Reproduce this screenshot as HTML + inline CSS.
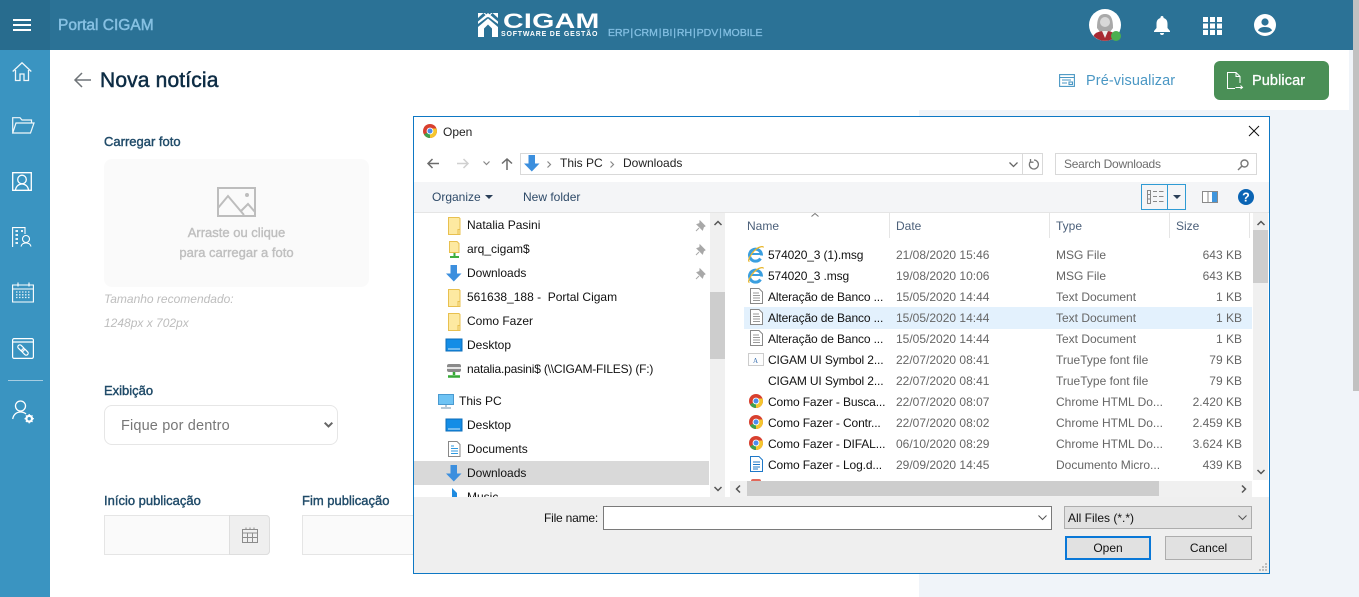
<!DOCTYPE html>
<html lang="pt"><head><meta charset="utf-8"><title>Nova notícia</title>
<style>
*{box-sizing:border-box}
html,body{margin:0;padding:0;width:1359px;height:597px;overflow:hidden;background:#fff;font-family:"Liberation Sans",sans-serif}
.a,.t{position:absolute}
.t{white-space:nowrap;line-height:16px;height:16px}
.b{-webkit-text-stroke:.4px currentColor}
svg{position:absolute;overflow:visible}
.d{font-size:12px;color:#111}
.n{letter-spacing:-.13px}
.g{font-size:12px;color:#666}
.h{font-size:12px;color:#4c607a}
.r{text-align:right;width:60px;left:1182px}
.l{font-size:13px;color:#1f4a68}
</style></head><body>
<svg width="0" height="0" style="position:absolute"><defs>
<g id="folder"><path d="M.5.5H11L12 1.5V17.5H.5Z" fill="#fde9a1" stroke="#e8c04f"/><path d="M10 17V12.5H12" fill="none" stroke="#e8c04f"/></g>
<g id="down"><path d="M4.5 0H11V8.500H15.500L7.800 16.500 0 8.500H4.500Z" fill="#3c8fde"/></g>
<g id="pin"><path d="M4 1L9 6 7.500 7 6.500 10 1 4.500 3.800 3.500ZM3 8L0 11" fill="#a8a8a8" stroke="#a8a8a8"/></g>
<g id="chrome"><circle cx="7" cy="7" r="7" fill="#d8402f"/><path d="M7 7L1 10.500A7 7 0 0 0 7 14Z" fill="#3fa04e"/><path d="M7 7V14A7 7 0 0 0 13.500 4.500H7Z" fill="#f5c62e"/><circle cx="7" cy="7" r="3.400" fill="#fff"/><circle cx="7" cy="7" r="2.500" fill="#4b8ced"/></g>
<g id="doc"><path d="M.5.5H9L12.500 4V15.500H.5Z" fill="#fff" stroke="#888"/><path d="M3 5H9M3 7.500H10M3 10H10M3 12.500H10" stroke="#999"/></g>
<g id="ie"><path d="M13.500 9.500A6 6 0 1 0 12.500 12.500" fill="none" stroke="#3a9fe0" stroke-width="3"/><path d="M3.500 8H14" stroke="#3a9fe0" stroke-width="2"/><path d="M1.500 15.500C-1 15 2.500 9 6 5 10 1 15-.5 15.500 1.500" fill="none" stroke="#e8b52a" stroke-width="1.200"/></g>
<g id="desk"><rect width="16" height="12" fill="#148de6" stroke="#0b6cb8"/><path d="M2 10H14" stroke="#cfe9fb"/></g>
</defs></svg>

<!-- top bar -->
<div class="a" style="left:0;top:0;width:1359px;height:50px;background:#2b7296"></div>
<div class="a" style="left:0;top:0;width:50px;height:50px;background:#286c8e"></div>
<div class="a" style="left:13px;top:19px;width:18px;height:2px;background:#fff"></div>
<div class="a" style="left:13px;top:24px;width:18px;height:2px;background:#fff"></div>
<div class="a" style="left:13px;top:29px;width:18px;height:2px;background:#fff"></div>
<div class="t b" style="left:58px;top:18px;font-size:15.500px;color:#86c0e2;-webkit-text-stroke-width:.5px">Portal CIGAM</div>

<!-- logo -->
<svg style="left:477px;top:13px" width="22" height="24" viewBox="0 0 22 24"><path d="M1 0H8L11 3 14 0H21V5L15.500 0 11 4.500 6.500 0 1 5ZM1 8.500L11 0 21 8.500V11L11 3.500 1 11ZM1 14L11 5.500 21 14V24H15V15.500L11 11.500 7 15.500V24H1Z" fill="#fff"/></svg>
<div class="t" style="left:503px;top:11px;height:22px;line-height:22px;font-size:21px;font-weight:bold;color:#fff;transform-origin:0 50%;transform:scaleX(1.36);letter-spacing:.2px">CIGAM</div>
<div class="t" style="left:501px;top:31px;height:8px;line-height:8px;font-size:7px;font-weight:bold;color:#fff;letter-spacing:.8px">SOFTWARE DE GESTÃO</div>
<div class="t b" style="left:608px;top:25px;font-size:10.500px;color:#83bfe2;word-spacing:-2px;-webkit-text-stroke-width:.3px">ERP | CRM | BI | RH | PDV | MOBILE</div>

<!-- top icons -->
<svg style="left:1089px;top:9px" width="34" height="34" viewBox="0 0 34 34"><circle cx="16" cy="16" r="16" fill="#fff"/><path d="M8 19C8 8 11 5 16 5S24 8 24 19L21 23H11Z" fill="#a9a9a9"/><circle cx="16" cy="13" r="5" fill="#d8d8d8"/><path d="M4.500 27C6 23 12 22 16 22S26 23 27.500 27A16 16 0 0 1 4.500 27Z" fill="#a82a33"/><path d="M13 22H19L16 29Z" fill="#eee"/><circle cx="27" cy="27" r="5" fill="#4caf50"/></svg>
<svg style="left:1154px;top:16px" width="16" height="19" viewBox="0 0 16 19"><path d="M8 0A1.500 1.500 0 0 1 9.500 2C12.500 2.800 13.500 5 13.500 8V12L16 15V16H0V15L2.500 12V8C2.500 5 3.500 2.800 6.500 2A1.500 1.500 0 0 1 8 0ZM6 17H10A2 2 0 0 1 6 17Z" fill="#fff"/></svg>
<svg style="left:1203px;top:17px" width="19" height="18" viewBox="0 0 19 18" fill="#fff"><rect width="5" height="5"/><rect x="7" width="5" height="5"/><rect x="14" width="5" height="5"/><rect y="6.500" width="5" height="5"/><rect x="7" y="6.500" width="5" height="5"/><rect x="14" y="6.500" width="5" height="5"/><rect y="13" width="5" height="5"/><rect x="7" y="13" width="5" height="5"/><rect x="14" y="13" width="5" height="5"/></svg>
<svg style="left:1254px;top:14px" width="22" height="22" viewBox="0 0 22 22"><circle cx="11" cy="11" r="11" fill="#fff"/><circle cx="11" cy="8" r="3.600" fill="#2b7296"/><path d="M4 16.500C5 13.800 8 13 11 13S17 13.800 18 16.500C14 19.500 8 19.500 4 16.500Z" fill="#2b7296"/></svg>

<!-- sidebar -->
<div class="a" style="left:0;top:50px;width:50px;height:547px;background:#3a94c1"></div>
<svg style="left:12px;top:62px" width="20" height="20" viewBox="0 0 20 20" fill="none" stroke="#fff" stroke-width="1.300" opacity=".92"><path d="M.7 9.500L10 .8 19.300 9.500M3.500 8V18.500H8V12H12V18.500H16.500V8"/></svg>
<svg style="left:12px;top:117px" width="23" height="17" viewBox="0 0 23 17" fill="none" stroke="#fff" stroke-width="1.200" opacity=".92"><path d="M.7 16V.7H8L10 3H19.500V6M.7 16H18.500L22 6H4Z"/></svg>
<svg style="left:12px;top:172px" width="20" height="19" viewBox="0 0 20 19" fill="none" stroke="#fff" stroke-width="1.300"><path d="M.7.700H19.300V18.300H.7Z"/><circle cx="10" cy="7.500" r="4.300"/><path d="M3.500 18C4 14 7 12 10 12S16 14 16.500 18"/></svg>
<svg style="left:12px;top:227px" width="20" height="20" viewBox="0 0 20 20" fill="none" stroke="#fff" stroke-width="1.100"><path d="M.6 20V.6H13V7"/><circle cx="14" cy="12" r="3.500"/><path d="M9 19.500C9.500 17 11.500 16 14 16S18.500 17 19 19.500"/><path d="M3.500 4H6M9 4H11M3.500 8H6M3.500 12H6M3.500 16H6" stroke-width="1.800"/></svg>
<svg style="left:12px;top:282px" width="22" height="21" viewBox="0 0 22 21" fill="none" stroke="#fff" stroke-width="1.100"><path d="M.6 3H21.400V20H.6ZM.6 7H21.400M6 .5V4.500M17 .5V4.500"/><path d="M4 10H18M4 12.800H18M4 15.500H18" stroke-dasharray="1.500 1.500" stroke-width="1.300" opacity=".85"/></svg>
<svg style="left:12px;top:338px" width="22" height="21" viewBox="0 0 22 21" fill="none" stroke="#fff" stroke-width="1.200"><rect x=".6" y=".6" width="20.800" height="19.800" rx="1.500"/><path d="M.6 4H21.400"/><g transform="rotate(45 11 12)"><rect x="4.500" y="10" width="7.500" height="4" rx="2"/><rect x="10" y="10" width="7.500" height="4" rx="2"/></g></svg>
<div class="a" style="left:8px;top:380px;width:35px;height:1px;background:#a6cde2"></div>
<svg style="left:12px;top:400px" width="23" height="24" viewBox="0 0 23 24" fill="none" stroke="#fff" stroke-width="1.300"><circle cx="8.500" cy="6" r="5"/><path d="M.7 19C1.500 14 5 12 8.500 12 11 12 13 13 14 14"/><circle cx="17.200" cy="18.700" r="2.800" stroke-width="2.200"/><path d="M17.200 14V23.400M12.500 18.700H22M13.900 15.400L20.500 22M20.500 15.400L13.900 22" stroke-width="1.200" stroke-dasharray="1.500 6.500"/></svg>

<!-- main -->
<div class="a" style="left:919px;top:110px;width:434px;height:487px;background:#f0f4f9"></div>
<div class="a" style="left:1349px;top:50px;width:4px;height:60px;background:#f0f4f9"></div>
<div class="a" style="left:1353px;top:0;width:6px;height:597px;background:#f0f4f9"></div>
<div class="a" style="left:1353px;top:0;width:6px;height:391px;background:#c1c1c1"></div>

<svg style="left:74px;top:72px" width="17" height="16" viewBox="0 0 17 16" fill="none" stroke="#6f7478" stroke-width="1.500"><path d="M17 8H1M8 1L1 8 8 15"/></svg>
<div class="t b" style="left:100px;top:69px;height:24px;line-height:24px;font-size:21px;color:#0d2c44;letter-spacing:.15px;-webkit-text-stroke-width:.5px">Nova notícia</div>

<svg style="left:1059px;top:74px" width="16" height="13" viewBox="0 0 16 13" fill="none" stroke="#4a97c4" stroke-width="1.100"><rect x=".6" y=".6" width="14.800" height="11.800"/><path d="M.6 3.500H15.400M3 6H12M3 9H8"/><rect x="10" y="8" width="3.500" height="2.500"/></svg>
<div class="t" style="left:1086px;top:73px;font-size:14.500px;color:#4a97c4;letter-spacing:.1px">Pré-visualizar</div>
<div class="a" style="left:1214px;top:61px;width:115px;height:39px;background:#4a8f56;border-radius:6px"></div>
<svg style="left:1227px;top:72px" width="16" height="17" viewBox="0 0 16 17" fill="none" stroke="#fff" stroke-width="1"><path d="M13 11V4.500L9 .5H.5V16.500H8M9 .5V4.500H13M8.500 15.500H15.500M13.500 13.500L15.500 15.500 13.500 17"/></svg>
<div class="t b" style="left:1252px;top:73px;font-size:14.500px;color:#fff;letter-spacing:.1px;-webkit-text-stroke-width:.3px">Publicar</div>

<div class="t b l" style="left:104px;top:134px">Carregar foto</div>
<div class="a" style="left:104px;top:159px;width:265px;height:128px;background:#fafafa;border-radius:8px"></div>
<svg style="left:217px;top:187px" width="39" height="30" viewBox="0 0 39 30" fill="none" stroke="#bdbdbd" stroke-width="2"><rect x="1" y="1" width="37" height="28"/><path d="M1 21L11 9 27 28M24 24L31 17 38 25"/><circle cx="30" cy="8" r="1" fill="#bdbdbd"/></svg>
<div class="t b" style="left:104px;top:225px;width:265px;text-align:center;font-size:13px;color:#bfbfbf">Arraste ou clique</div>
<div class="t b" style="left:104px;top:245px;width:265px;text-align:center;font-size:13px;color:#bfbfbf">para carregar a foto</div>
<div class="t" style="left:104px;top:291px;font-size:12px;font-style:italic;color:#bdbdbd">Tamanho recomendado:</div>
<div class="t" style="left:104px;top:315px;font-size:12px;font-style:italic;color:#bdbdbd">1248px x 702px</div>

<div class="t b l" style="left:104px;top:383px">Exibição</div>
<div class="a" style="left:104px;top:405px;width:234px;height:40px;border:1px solid #e6e6e6;border-radius:8px;background:#fff"></div>
<div class="t" style="left:121px;top:418px;font-size:14.500px;color:#777;letter-spacing:.15px">Fique por dentro</div>
<svg style="left:324px;top:422px" width="9" height="6" viewBox="0 0 9 6" fill="none" stroke="#666" stroke-width="2"><path d="M.7.700L4.500 4.500 8.300.7"/></svg>

<div class="t b l" style="left:104px;top:493px">Início publicação</div>
<div class="t b l" style="left:302px;top:493px">Fim publicação</div>
<div class="a" style="left:104px;top:515px;width:166px;height:40px;background:#fafafa;border:1px solid #e5e5e5;border-radius:0 4px 4px 0"></div>
<div class="a" style="left:229px;top:515px;width:41px;height:40px;background:#efefef;border:1px solid #dedede;border-radius:0 4px 4px 0"></div>
<svg style="left:241px;top:527px" width="18" height="17" viewBox="0 0 18 17" fill="none" stroke="#8c8c8c"><path d="M1.500 2.500H16.500V15.500H1.500ZM1.500 6H16.500M1.500 10.500H16.500M6.500 6V15.500M11.500 6V15.500M5 .5V3M9 .5V3M13 .5V3"/></svg>
<div class="a" style="left:302px;top:515px;width:112px;height:40px;background:#fafafa;border:1px solid #e5e5e5"></div>

<!-- dialog -->
<div class="a" style="left:413px;top:116px;width:857px;height:458px;background:#fff;border:1px solid #0e78c4"></div>
<svg style="left:423px;top:124px" width="14" height="14"><use href="#chrome"/></svg>
<div class="t d" style="left:443px;top:124px;color:#222">Open</div>
<svg style="left:1249px;top:126px" width="10" height="10" fill="none" stroke="#111"><path d="M0 0L10 10M10 0L0 10"/></svg>

<svg style="left:427px;top:158px" width="12" height="11" viewBox="0 0 12 11" fill="none" stroke="#6c6c6c" stroke-width="1.500"><path d="M12 5.500H1M5.500 1L1 5.500 5.500 10"/></svg>
<svg style="left:457px;top:158px" width="12" height="11" viewBox="0 0 12 11" fill="none" stroke="#d0d0d0" stroke-width="1.500"><path d="M0 5.500H11M6.500 1L11 5.500 6.500 10"/></svg>
<svg style="left:483px;top:161px" width="7" height="5" viewBox="0 0 7 5" fill="none" stroke="#888" stroke-width="1.200"><path d="M.5.5L3.500 3.500 6.500.5"/></svg>
<svg style="left:501px;top:158px" width="12" height="12" viewBox="0 0 12 12" fill="none" stroke="#6c6c6c" stroke-width="1.500"><path d="M6 12V1M1 5.500L6 1 11 5.500"/></svg>
<div class="a" style="left:520px;top:153px;width:523px;height:22px;border:1px solid #d9d9d9;background:#fff"></div>
<div class="a" style="left:1022px;top:153px;width:1px;height:22px;background:#d9d9d9"></div>
<svg style="left:524px;top:155px" width="16" height="17"><use href="#down"/></svg>
<svg style="left:547px;top:161px" width="5" height="7" fill="none" stroke="#888" stroke-width="1.200"><path d="M.5.5L3.500 3.500.5 6.500"/></svg>
<div class="t" style="left:560px;top:155px;font-size:12px;color:#222">This PC</div>
<svg style="left:610px;top:161px" width="5" height="7" fill="none" stroke="#888" stroke-width="1.200"><path d="M.5.5L3.500 3.500.5 6.500"/></svg>
<div class="t" style="left:623px;top:155px;font-size:12px;color:#222">Downloads</div>
<svg style="left:1009px;top:162px" width="9" height="6" fill="none" stroke="#666" stroke-width="1.300"><path d="M.5.5L4.500 4.500 8.500.5"/></svg>
<svg style="left:1028px;top:159px" width="11" height="11" viewBox="0 0 11 11" fill="none" stroke="#777" stroke-width="1.300"><path d="M6 1A4.500 4.500 0 1 1 2.500 2.500M2.500 0V3.200H5.500"/></svg>
<div class="a" style="left:1055px;top:153px;width:202px;height:22px;border:1px solid #d9d9d9;background:#fff"></div>
<div class="t" style="left:1064px;top:156px;font-size:12px;color:#6d6d6d;letter-spacing:-.25px">Search Downloads</div>
<svg style="left:1237px;top:159px" width="12" height="12" viewBox="0 0 12 12" fill="none" stroke="#777" stroke-width="1.400"><circle cx="7.500" cy="4.500" r="3.500"/><path d="M5 7L1 11"/></svg>

<div class="a" style="left:414px;top:182px;width:855px;height:31px;background:#f4f5f7;border-bottom:1px solid #e5e5e5"></div>
<div class="t" style="left:432px;top:189px;font-size:12px;color:#2e4a68">Organize</div>
<div class="a" style="left:485px;top:195px;border:4px solid transparent;border-top:4px solid #2a3f58;border-bottom:0"></div>
<div class="t" style="left:523px;top:189px;font-size:12px;color:#2e4a68">New folder</div>
<div class="a" style="left:1141px;top:184px;width:45px;height:26px;border:1px solid #2f9bd4;background:#f4f5f7"></div>
<div class="a" style="left:1167px;top:184px;width:1px;height:26px;background:#2f9bd4"></div>
<svg style="left:1147px;top:190px" width="17" height="14" fill="none" stroke="#888"><path d="M.5.500H3.500V13.500H.5ZM.5 4.500H3.500M.5 9H3.500M6 1.500H10M12 1.500H16.500M6 6.500H10M12 6.500H16.500M6 11.500H10M12 11.500H16.500"/></svg>
<div class="a" style="left:1173px;top:195px;border:4px solid transparent;border-top:4px solid #2a3f58;border-bottom:0"></div>
<svg style="left:1202px;top:191px" width="16" height="12"><rect x=".5" y=".5" width="15" height="11" fill="#fff" stroke="#8a8a8a"/><rect x="10" y="1" width="5" height="10" fill="#3f95dc"/><path d="M6 1V11" stroke="#8a8a8a"/></svg>
<svg style="left:1238px;top:189px" width="16" height="16"><circle cx="8" cy="8" r="8" fill="#0a64b4"/><text x="8" y="12.500" text-anchor="middle" font-family="Liberation Sans" font-size="12.500" font-weight="bold" fill="#fff">?</text></svg>

<!-- tree pane -->
<div class="a" style="left:414px;top:461px;width:295px;height:24px;background:#d9d9d9"></div>
<div class="t d" style="left:467px;top:217px">Natalia Pasini</div>
<div class="t d" style="left:467px;top:241px">arq_cigam$</div>
<div class="t d" style="left:467px;top:265px">Downloads</div>
<div class="t d" style="left:467px;top:289px">561638_188 -&nbsp; Portal Cigam</div>
<div class="t d" style="left:467px;top:313px">Como Fazer</div>
<div class="t d" style="left:467px;top:337px">Desktop</div>
<div class="t d" style="left:467px;top:361px;letter-spacing:-.2px">natalia.pasini$ (\\CIGAM-FILES) (F:)</div>
<div class="t d" style="left:459px;top:393px">This PC</div>
<div class="t d" style="left:467px;top:417px">Desktop</div>
<div class="t d" style="left:467px;top:441px">Documents</div>
<div class="t d" style="left:467px;top:465px">Downloads</div>
<div class="a" style="left:467px;top:485px;width:60px;height:12px;overflow:hidden"><div class="t d" style="left:0;top:4px">Music</div></div>
<svg style="left:448px;top:217px" width="13" height="18"><use href="#folder"/></svg>
<svg style="left:449px;top:241px" width="13" height="18"><path d="M.5.500H8L10 2.500V11.500H.5Z" fill="#fde9a1" stroke="#e8c04f"/><path d="M5.500 12V15M1 16H10" stroke="#3fae3f" stroke-width="2"/></svg>
<svg style="left:446px;top:265px" width="16" height="17"><use href="#down"/></svg>
<svg style="left:448px;top:289px" width="13" height="18"><use href="#folder"/></svg>
<svg style="left:448px;top:313px" width="13" height="18"><use href="#folder"/></svg>
<svg style="left:446px;top:339px" width="16" height="12"><use href="#desk"/></svg>
<svg style="left:447px;top:364px" width="14" height="14"><rect width="14" height="8" rx="2" fill="#8a8a8a"/><rect y="3" width="14" height="2" fill="#e6e6e6"/><path d="M7 8V11M1 12.500H13" stroke="#37a937" stroke-width="2.500"/></svg>
<svg style="left:438px;top:394px" width="16" height="15"><rect x=".5" y=".5" width="15" height="10" fill="#6ec3f4" stroke="#4a9ad0"/><path d="M8 11V13M3 14H13" stroke="#9db6c8" stroke-width="1.500"/></svg>
<svg style="left:446px;top:419px" width="16" height="12"><use href="#desk"/></svg>
<svg style="left:448px;top:441px" width="13" height="16"><path d="M.5.500H9L12 3.500V15.500H.5Z" fill="#fff" stroke="#888"/><path d="M3 5H6M3 7.500H10M3 10H10M3 12.500H10" stroke="#2f9ae0"/></svg>
<svg style="left:446px;top:465px" width="16" height="17"><use href="#down"/></svg>
<svg style="left:452px;top:488px" width="8" height="9"><path d="M0 0L5 5V9H0Z" fill="#1f8be0"/></svg>
<svg style="left:696px;top:220px" width="11" height="11"><use href="#pin"/></svg>
<svg style="left:696px;top:244px" width="11" height="11"><use href="#pin"/></svg>
<svg style="left:696px;top:268px" width="11" height="11"><use href="#pin"/></svg>

<!-- tree scrollbar -->
<div class="a" style="left:710px;top:213px;width:15px;height:284px;background:#f0f0f0"></div>
<div class="a" style="left:710px;top:292px;width:15px;height:67px;background:#cdcdcd"></div>
<svg style="left:714px;top:220px" width="8" height="6" fill="none" stroke="#555" stroke-width="1.500"><path d="M.5 5L4 1.500 7.500 5"/></svg>
<svg style="left:714px;top:486px" width="8" height="6" fill="none" stroke="#555" stroke-width="1.500"><path d="M.5 1L4 4.500 7.500 1"/></svg>

<!-- list header -->
<div class="t h" style="left:747px;top:218px">Name</div>
<svg style="left:811px;top:213px" width="8" height="4" fill="none" stroke="#777"><path d="M.5 3.500L4 .5 7.500 3.500"/></svg>
<div class="t h" style="left:896px;top:218px">Date</div>
<div class="t h" style="left:1056px;top:218px">Type</div>
<div class="t h" style="left:1176px;top:218px">Size</div>
<div class="a" style="left:889px;top:213px;width:1px;height:25px;background:#e5e5e5"></div>
<div class="a" style="left:1049px;top:213px;width:1px;height:25px;background:#e5e5e5"></div>
<div class="a" style="left:1169px;top:213px;width:1px;height:25px;background:#e5e5e5"></div>
<div class="a" style="left:1249px;top:213px;width:1px;height:25px;background:#e5e5e5"></div>

<!-- rows -->
<div class="a" style="left:744px;top:307px;width:508px;height:22px;background:#e3f1fd"></div>
<div class="t d n" style="left:768px;top:247px">574020_3 (1).msg</div><div class="t g" style="left:896px;top:247px">21/08/2020 15:46</div><div class="t g" style="left:1056px;top:247px">MSG File</div><div class="t g r" style="top:247px">643 KB</div>
<div class="t d n" style="left:768px;top:268px">574020_3 .msg</div><div class="t g" style="left:896px;top:268px">19/08/2020 10:06</div><div class="t g" style="left:1056px;top:268px">MSG File</div><div class="t g r" style="top:268px">643 KB</div>
<div class="t d n" style="left:768px;top:289px">Alteração de Banco ...</div><div class="t g" style="left:896px;top:289px">15/05/2020 14:44</div><div class="t g" style="left:1056px;top:289px">Text Document</div><div class="t g r" style="top:289px">1 KB</div>
<div class="t d n" style="left:768px;top:310px">Alteração de Banco ...</div><div class="t g" style="left:896px;top:310px">15/05/2020 14:44</div><div class="t g" style="left:1056px;top:310px">Text Document</div><div class="t g r" style="top:310px">1 KB</div>
<div class="t d n" style="left:768px;top:331px">Alteração de Banco ...</div><div class="t g" style="left:896px;top:331px">15/05/2020 14:44</div><div class="t g" style="left:1056px;top:331px">Text Document</div><div class="t g r" style="top:331px">1 KB</div>
<div class="t d n" style="left:768px;top:352px">CIGAM UI Symbol 2...</div><div class="t g" style="left:896px;top:352px">22/07/2020 08:41</div><div class="t g" style="left:1056px;top:352px">TrueType font file</div><div class="t g r" style="top:352px">79 KB</div>
<div class="t d n" style="left:768px;top:373px">CIGAM UI Symbol 2...</div><div class="t g" style="left:896px;top:373px">22/07/2020 08:41</div><div class="t g" style="left:1056px;top:373px">TrueType font file</div><div class="t g r" style="top:373px">79 KB</div>
<div class="t d n" style="left:768px;top:394px">Como Fazer - Busca...</div><div class="t g" style="left:896px;top:394px">22/07/2020 08:07</div><div class="t g" style="left:1056px;top:394px">Chrome HTML Do...</div><div class="t g r" style="top:394px">2.420 KB</div>
<div class="t d n" style="left:768px;top:415px">Como Fazer - Contr...</div><div class="t g" style="left:896px;top:415px">22/07/2020 08:02</div><div class="t g" style="left:1056px;top:415px">Chrome HTML Do...</div><div class="t g r" style="top:415px">2.459 KB</div>
<div class="t d n" style="left:768px;top:436px">Como Fazer - DIFAL...</div><div class="t g" style="left:896px;top:436px">06/10/2020 08:29</div><div class="t g" style="left:1056px;top:436px">Chrome HTML Do...</div><div class="t g r" style="top:436px">3.624 KB</div>
<div class="t d n" style="left:768px;top:457px">Como Fazer - Log.d...</div><div class="t g" style="left:896px;top:457px">29/09/2020 14:45</div><div class="t g" style="left:1056px;top:457px">Documento Micro...</div><div class="t g r" style="top:457px">439 KB</div>

<svg style="left:748px;top:246px" width="16" height="17"><use href="#ie"/></svg>
<svg style="left:748px;top:267px" width="16" height="17"><use href="#ie"/></svg>
<svg style="left:750px;top:288px" width="13" height="16"><use href="#doc"/></svg>
<svg style="left:750px;top:309px" width="13" height="16"><use href="#doc"/></svg>
<svg style="left:750px;top:330px" width="13" height="16"><use href="#doc"/></svg>
<svg style="left:748px;top:353px" width="16" height="13"><rect x=".5" y=".5" width="15" height="12" fill="#fdfdfd" stroke="#ccc"/><text x="5" y="10" font-family="Liberation Serif" font-size="7" fill="#3a70b0">A</text></svg>
<svg style="left:749px;top:394px" width="14" height="14"><use href="#chrome"/></svg>
<svg style="left:749px;top:415px" width="14" height="14"><use href="#chrome"/></svg>
<svg style="left:749px;top:436px" width="14" height="14"><use href="#chrome"/></svg>
<svg style="left:750px;top:456px" width="13" height="16"><path d="M.5.500H9L12.500 4V15.500H.5Z" fill="#fff" stroke="#1e78c8"/><path d="M3 6H10M3 8.500H10M3 11H10M3 13H8" stroke="#1e78c8"/></svg>
<div class="a" style="left:751px;top:479px;width:10px;height:2px;background:#e2685a;border-radius:5px 5px 0 0"></div>

<!-- list scrollbars -->
<div class="a" style="left:1253px;top:213px;width:15px;height:267px;background:#f0f0f0"></div>
<div class="a" style="left:1253px;top:230px;width:15px;height:53px;background:#cdcdcd"></div>
<svg style="left:1257px;top:220px" width="8" height="6" fill="none" stroke="#555" stroke-width="1.500"><path d="M.5 5L4 1.500 7.500 5"/></svg>
<svg style="left:1257px;top:469px" width="8" height="6" fill="none" stroke="#555" stroke-width="1.500"><path d="M.5 1L4 4.500 7.500 1"/></svg>
<div class="a" style="left:730px;top:481px;width:522px;height:16px;background:#f0f0f0"></div>
<div class="a" style="left:747px;top:481px;width:412px;height:15px;background:#cdcdcd"></div>
<svg style="left:735px;top:485px" width="6" height="8" fill="none" stroke="#555" stroke-width="1.500"><path d="M5 .5L1.500 4 5 7.500"/></svg>
<svg style="left:1241px;top:485px" width="6" height="8" fill="none" stroke="#555" stroke-width="1.500"><path d="M1 .5L4.500 4 1 7.500"/></svg>

<!-- bottom -->
<div class="a" style="left:414px;top:497px;width:855px;height:76px;background:#efefef"></div>
<div class="t d" style="left:544px;top:510px;color:#111;letter-spacing:-.2px">File name:</div>
<div class="a" style="left:603px;top:506px;width:449px;height:24px;background:#fff;border:1px solid #7a7a7a"></div>
<svg style="left:1038px;top:515px" width="9" height="6" fill="none" stroke="#555"><path d="M.5.5L4.500 4.500 8.500.5"/></svg>
<div class="a" style="left:1064px;top:506px;width:188px;height:23px;background:#e1e1e1;border:1px solid #adadad"></div>
<div class="t d" style="left:1068px;top:510px;color:#111">All Files (*.*)</div>
<svg style="left:1238px;top:515px" width="9" height="6" fill="none" stroke="#555"><path d="M.5.5L4.500 4.500 8.500.5"/></svg>
<div class="a" style="left:1065px;top:536px;width:86px;height:24px;background:#e1e1e1;border:2px solid #0a78d7"></div>
<div class="t d" style="left:1065px;top:540px;width:86px;text-align:center;color:#111">Open</div>
<div class="a" style="left:1165px;top:536px;width:87px;height:24px;background:#e1e1e1;border:1px solid #adadad"></div>
<div class="t d" style="left:1165px;top:540px;width:87px;text-align:center;color:#111">Cancel</div>
<svg style="left:1258px;top:562px" width="10" height="10" fill="#bdbdbd"><rect x="7" y="1" width="2" height="2"/><rect x="4" y="4" width="2" height="2"/><rect x="7" y="4" width="2" height="2"/><rect x="1" y="7" width="2" height="2"/><rect x="4" y="7" width="2" height="2"/><rect x="7" y="7" width="2" height="2"/></svg>
</body></html>
